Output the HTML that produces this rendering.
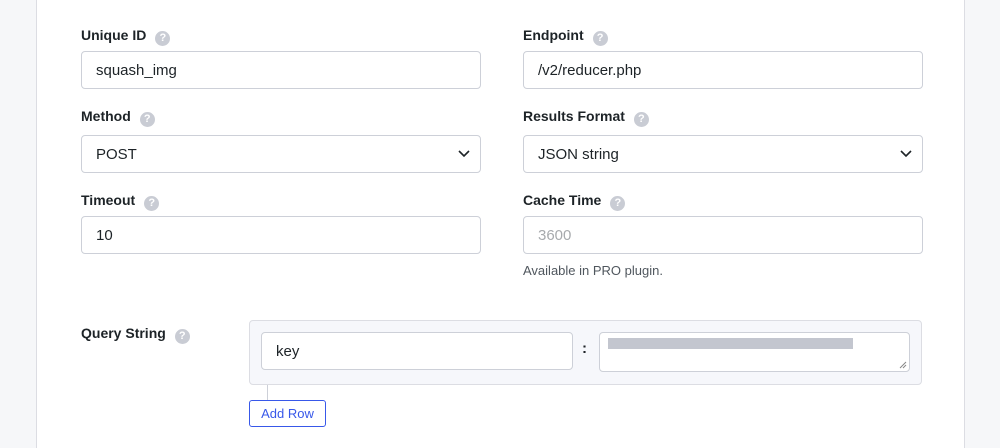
<!DOCTYPE html>
<html><head><style>
*{box-sizing:border-box;margin:0;padding:0}
body{width:1000px;height:448px;background:#fff;font-family:"Liberation Sans",sans-serif;position:relative;overflow:hidden;color:#1d2327}
.strip{position:absolute;left:0;top:0;width:37px;height:448px;background:#f6f7f9;border-right:1px solid #dcdde3}
.rs{position:absolute;left:964px;top:0;width:36px;height:448px;background:#f6f7f9;border-left:1px solid #dcdde3}
.lbl{position:absolute;font-size:14px;font-weight:bold;color:#1d2327}
.q{display:inline-block;width:15px;height:15px;border-radius:50%;background:#c9ccd4;color:#fff;font-size:11px;text-align:center;line-height:15px;margin-left:9px;vertical-align:-1px}
.in{position:absolute;height:38px;border:1px solid #cdd0d8;border-radius:4px;background:#fff;font-size:15px;padding-left:14px;line-height:37px;color:#1d2327}
.ph{color:#a7aaad}
.chev{position:absolute;right:10px;top:14px}
</style></head><body>
<div class="strip"></div><div class="rs"></div>
<div class="lbl" style="left:81px;top:27px">Unique ID<span class="q">?</span></div>
<div class="lbl" style="left:523px;top:27px">Endpoint<span class="q">?</span></div>
<div class="in" style="left:81px;top:51px;width:400px">squash_img</div>
<div class="in" style="left:523px;top:51px;width:400px">/v2/reducer.php</div>
<div class="lbl" style="left:81px;top:108px">Method<span class="q">?</span></div>
<div class="lbl" style="left:523px;top:108px">Results Format<span class="q">?</span></div>
<div class="in" style="left:81px;top:135px;width:400px">POST<svg class="chev" width="12" height="8" viewBox="0 0 12 8"><path d="M1 1l5 5 5-5" fill="none" stroke="#1d2327" stroke-width="1.6"/></svg></div>
<div class="in" style="left:523px;top:135px;width:400px">JSON string<svg class="chev" width="12" height="8" viewBox="0 0 12 8"><path d="M1 1l5 5 5-5" fill="none" stroke="#1d2327" stroke-width="1.6"/></svg></div>
<div class="lbl" style="left:81px;top:192px">Timeout<span class="q">?</span></div>
<div class="lbl" style="left:523px;top:192px">Cache Time<span class="q">?</span></div>
<div class="in" style="left:81px;top:216px;width:400px">10</div>
<div class="in ph" style="left:523px;top:216px;width:400px">3600</div>
<div style="position:absolute;left:523px;top:263px;font-size:13px;color:#50575e">Available in PRO plugin.</div>
<div class="lbl" style="left:81px;top:325px">Query String<span class="q">?</span></div>
<div style="position:absolute;left:249px;top:320px;width:673px;height:65px;background:#f6f7fb;border:1px solid #dcdde3;border-radius:4px"></div>
<div class="in" style="left:261px;top:332px;width:312px">key</div>
<div style="position:absolute;left:582px;top:340px;font-size:15px;font-weight:bold">:</div>
<div class="in" style="left:599px;top:332px;width:311px;height:40px"><div style="position:absolute;left:8px;top:5px;width:245px;height:11px;background:#c3c6cf"></div><svg style="position:absolute;right:2px;bottom:2px" width="8" height="8"><path d="M7 1L1 7M7 4L4 7" stroke="#888" stroke-width="1"/></svg></div>
<div style="position:absolute;left:267px;top:385px;width:1px;height:15px;background:#cdd0d8"></div>
<div style="position:absolute;left:249px;top:400px;width:77px;height:27px;border:1px solid #3858e9;border-radius:3px;color:#3858e9;font-size:13px;text-align:center;line-height:25px;background:#fff">Add Row</div>
</body></html>
